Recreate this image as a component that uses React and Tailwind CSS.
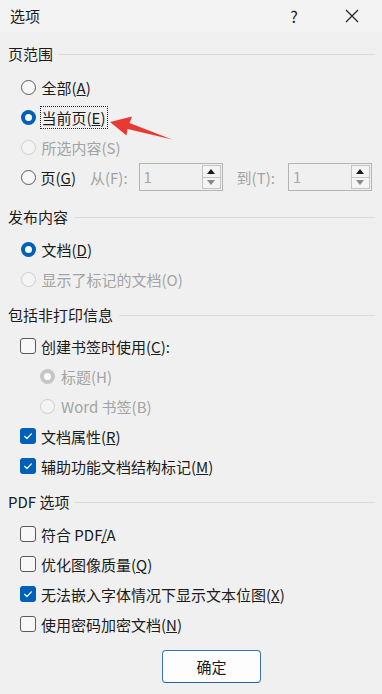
import React from "react";

const Radio = ({ checked, disabled }) => {
  if (checked) {
    return (
      <span
        className={
          "w-[15px] h-[15px] shrink-0 rounded-full flex items-center justify-center " +
          (disabled ? "bg-[#c6c6c6]" : "bg-[#005fb8]")
        }
      >
        <span className="w-[7px] h-[7px] rounded-full bg-white" />
      </span>
    );
  }
  return (
    <span
      className={
        "w-[15px] h-[15px] shrink-0 rounded-full border " +
        (disabled ? "border-[#cfcfcf] bg-[#f4f4f4]" : "border-[#5c5c5c] bg-[#f7f7f7]")
      }
    />
  );
};

const Check = ({ checked }) =>
  checked ? (
    <span className="w-[16px] h-[16px] shrink-0 rounded-[3px] bg-[#005fb8] flex items-center justify-center">
      <svg width="16" height="16" viewBox="0 0 16 16">
        <path d="M4.6 8.3 L6.9 10.5 L11.4 5.8" fill="none" stroke="white" strokeWidth="1.2" strokeLinecap="round" strokeLinejoin="round" />
      </svg>
    </span>
  ) : (
    <span className="w-[16px] h-[16px] shrink-0 rounded-[3px] border border-[#5a5a5a] bg-[#f7f7f7]" />
  );

const Header = ({ children, className = "" }) => (
  <div className={"h-[24px] flex items-center pl-[8px] pr-[7px] " + className}>
    <span className="text-[15px] leading-[20px] text-[#1b1b1b]">{children}</span>
    <span className="flex-1 h-px bg-[#dcdcdc] ml-[6px]" />
  </div>
);

const RadioRow = ({ checked, disabled, children, indent = false, focus = false }) => (
  <div className={"h-[30px] flex items-center " + (indent ? "pl-[40px]" : "pl-[20.5px]")}>
    <Radio checked={checked} disabled={disabled} />
    <span
      className={
        "ml-[4px] px-[1px] text-[15px] leading-[21px] border " +
        (focus ? "border-dotted border-[#222]" : "border-transparent") +
        (disabled ? " text-[#a3a3a3]" : " text-[#1b1b1b]")
      }
    >
      {children}
    </span>
  </div>
);

const CheckRow = ({ checked, children }) => (
  <div className="h-[30px] flex items-center pl-[20px]">
    <Check checked={checked} />
    <span className="ml-[5px] text-[15px] leading-[21px] text-[#1b1b1b]">{children}</span>
  </div>
);

const Spin = () => (
  <div className="w-[84px] h-[28px] border border-[#b4b4b4] bg-[#f0f0f0] flex items-stretch">
    <span className="flex-1 pl-[4px] text-[15px] leading-[26px] text-[#a8a8a8]">1</span>
    <div className="w-[19px] flex flex-col mr-[1px] my-[1px]">
      <div className="flex-1 border border-[#c4c4c4] bg-[#f4f4f4] flex items-center justify-center">
        <svg width="8" height="5" viewBox="0 0 8 5"><path d="M0 5 L4 0 L8 5 Z" fill="#1b1b1b" /></svg>
      </div>
      <div className="flex-1 border border-[#c4c4c4] border-t-0 bg-[#f4f4f4] flex items-center justify-center">
        <svg width="8" height="5" viewBox="0 0 8 5"><path d="M0 0 L4 5 L8 0 Z" fill="#8a8a8a" /></svg>
      </div>
    </div>
  </div>
);

export default function App() {
  return (
    <div className="relative w-[382px] h-[694px] overflow-hidden bg-[#f0f0f0] font-['Noto_Sans_CJK_SC','Noto_Sans',sans-serif] text-[#1b1b1b]">
      <div className="h-[32px] flex items-center bg-[#f3f3f3] pl-[10px] pr-[7px]">
        <span className="text-[15px] leading-[20px] flex-1">选项</span>
        <span className="w-[46px] text-center text-[16px] leading-[20px]">?</span>
        <span className="w-[46px] ml-[12px] flex items-center justify-center">
          <svg width="14" height="14" viewBox="0 0 14 14">
            <path d="M1 1 L13 13 M13 1 L1 13" stroke="#1b1b1b" strokeWidth="1.1" />
          </svg>
        </span>
      </div>

      <Header className="mt-[10px]">页范围</Header>
      <div className="mt-[6px] flex flex-col">
        <RadioRow>全部(<u>A</u>)</RadioRow>
        <RadioRow checked focus>当前页(<u>E</u>)</RadioRow>
        <RadioRow disabled>所选内容(S)</RadioRow>
        <div className="h-[30px] flex items-center pl-[20.5px]">
          <Radio />
          <span className="ml-[5px] text-[15px] leading-[21px]">页(<u>G</u>)</span>
          <span className="ml-[14px] text-[15px] leading-[21px] text-[#a3a3a3]">从(F):</span>
          <span className="ml-[11px]"><Spin /></span>
          <span className="ml-[14px] text-[15px] leading-[21px] text-[#a3a3a3]">到(T):</span>
          <span className="ml-[13px]"><Spin /></span>
        </div>
      </div>

      <Header className="mt-[13px]">发布内容</Header>
      <div className="mt-[5px] flex flex-col">
        <RadioRow checked>文档(<u>D</u>)</RadioRow>
        <RadioRow disabled>显示了标记的文档(O)</RadioRow>
      </div>

      <Header className="mt-[9px]">包括非打印信息</Header>
      <div className="mt-[4px] flex flex-col">
        <CheckRow>创建书签时使用(<u>C</u>):</CheckRow>
        <RadioRow indent checked disabled>标题(H)</RadioRow>
        <RadioRow indent disabled>Word 书签(B)</RadioRow>
        <CheckRow checked>文档属性(<u>R</u>)</CheckRow>
        <CheckRow checked>辅助功能文档结构标记(<u>M</u>)</CheckRow>
      </div>

      <Header className="mt-[9px]">PDF 选项</Header>
      <div className="mt-[5px] flex flex-col">
        <CheckRow>符合 PDF<u>/</u>A</CheckRow>
        <CheckRow>优化图像质量(<u>Q</u>)</CheckRow>
        <CheckRow checked>无法嵌入字体情况下显示文本位图(<u>X</u>)</CheckRow>
        <CheckRow>使用密码加密文档(<u>N</u>)</CheckRow>
      </div>

      <div className="mt-[11px] flex pl-[162px]">
        <button className="w-[99px] h-[33px] rounded-[4px] border border-[#3a73b5] border-b-[#2a5f9e] bg-[#fdfdfd] text-[15px] leading-[20px] text-[#1b1b1b]">
          确定
        </button>
      </div>

      <svg className="absolute left-0 top-0 pointer-events-none" width="382" height="694" viewBox="0 0 382 694">
        <path d="M110 122 L132 116.5 L129.5 123 L172 139.5 L127.5 129 L126.5 135.5 Z" fill="#e83a33" />
      </svg>
    </div>
  );
}
